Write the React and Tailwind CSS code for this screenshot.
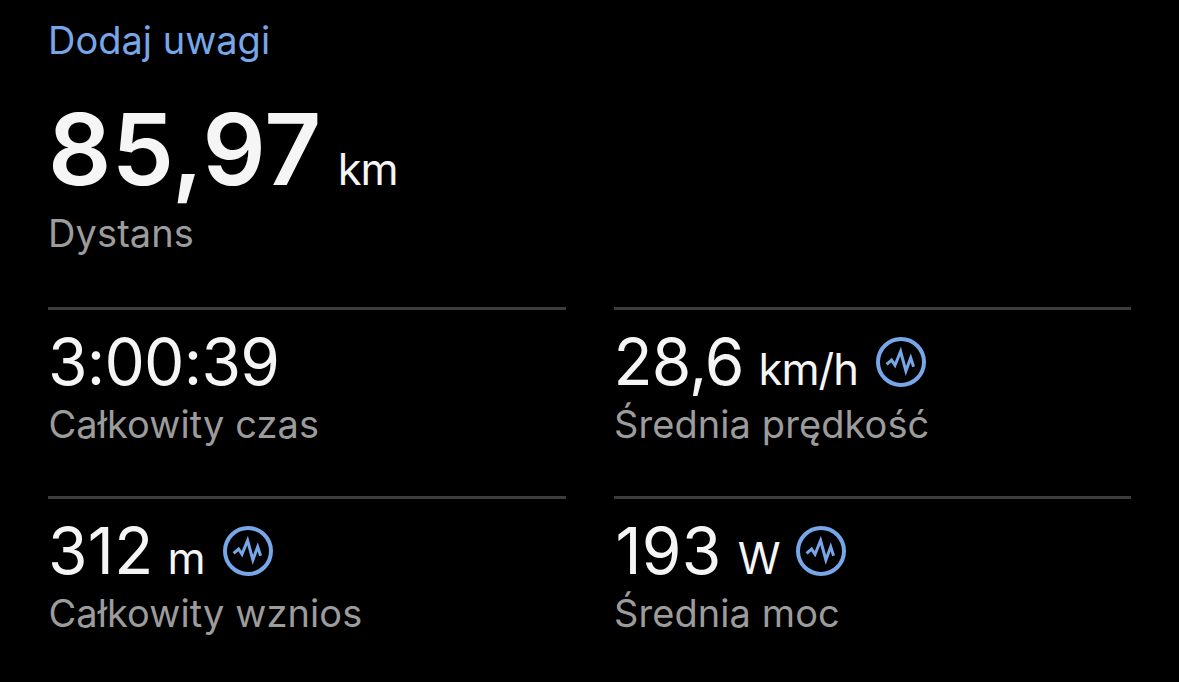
const stats = [
  {
    value: "3:00:39",
    label: "Całkowity czas",
    tracking: "tracking-[-0.75px]",
  },
  {
    value: "28,6",
    unit: "km/h",
    label: "Średnia prędkość",
    tracking: "tracking-[-0.9px]",
    unitStyle: "ml-[15px] tracking-[-1px]",
    chart: true,
  },
  {
    value: "312",
    unit: "m",
    label: "Całkowity wznios",
    tracking: "tracking-[0.3px]",
    unitStyle: "ml-[14px] tracking-[-0.5px]",
    chart: true,
  },
  {
    value: "193",
    unit: "W",
    label: "Średnia moc",
    tracking: "pl-[2px] tracking-[0.3px]",
    unitStyle: "ml-[16px] tracking-[-2.5px]",
    chart: true,
  },
];

const ChartIcon = () => (
  <svg
    viewBox="0 0 50 50"
    className="ml-[18px] size-[50px] shrink-0 text-[#77a7e8]"
    fill="none"
    stroke="currentColor"
  >
    <circle cx="25" cy="25" r="23" strokeWidth="4" />
    <path
      d="M10.6 27.4 L15.6 23 L19 28.2 L24.6 14.5 L29.9 34 L34.7 20.8 L37.6 29.8"
      strokeWidth="3"
      strokeMiterlimit="10"
    />
  </svg>
);

const Stat = ({ value, unit, label, tracking, unitStyle, chart }) => (
  <div className="border-t-[3px] border-[#3d3d3d] pt-[13px]">
    <div className="flex h-[78px] items-center">
      <p className={`text-[64px] leading-[78px] ${tracking}`}>
        {value}
        {unit && (
          <span className={`text-[43.5px] leading-none ${unitStyle}`}>
            {unit}
          </span>
        )}
      </p>
      {chart && <ChartIcon />}
    </div>
    <p className="pl-[0.5px] text-[38px] leading-[46px] tracking-[0.08px] text-[#9c9c9c]">
      {label}
    </p>
  </div>
);

const App = () => {
  return (
    <div className="h-[682px] w-full overflow-hidden bg-black px-12 pt-4 font-['Inter',sans-serif] text-[#f5f5f5]">
      <a className="block text-[38px] leading-[48px] text-[#77a7e8]">
        Dodaj uwagi
      </a>
      <p className="mt-[25px] text-[99px] leading-[120px] font-semibold tracking-[0.3px]">
        85,97
        <span className="ml-[16px] text-[43.5px] leading-none font-normal tracking-[-1px]">
          km
        </span>
      </p>
      <p className="text-[38px] leading-[48px] tracking-[0.1px] text-[#9c9c9c]">
        Dystans
      </p>
      <div className="mt-[50px] grid grid-cols-2 gap-x-12 gap-y-[49px]">
        {stats.map((stat) => (
          <Stat key={stat.label} {...stat} />
        ))}
      </div>
    </div>
  );
};

export default App;
